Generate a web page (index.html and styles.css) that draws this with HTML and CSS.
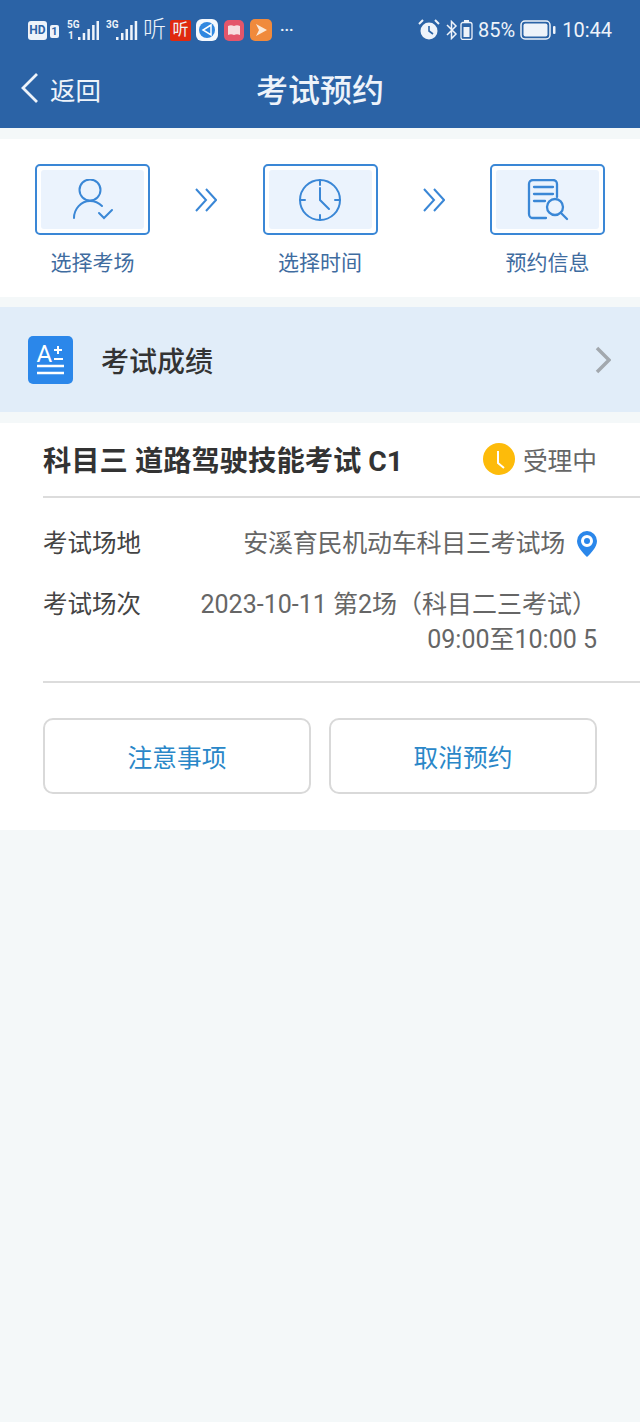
FILE: index.html
```html
<!DOCTYPE html>
<html lang="zh-CN">
  <head>
    <meta charset="UTF-8" />
    <meta name="viewport" content="width=device-width, initial-scale=1.0" />
    <title>考试预约</title>
    <link rel="stylesheet" href="styles.css">
  </head>
  <body>
    <header class="top">
      <div class="status">
        <div class="status-left">
          <span class="hd">HD</span>
          <span class="sim">1</span>
          <svg class="signal signal-5g" width="32" height="22" viewBox="0 0 32 22">
            <text x="0" y="9" class="tiny">5G</text>
            <text x="1" y="20" class="tiny">1</text>
            <g fill="#eef3fa">
              <rect x="11" y="18" width="2.500" height="3"/><rect x="15.700" y="14" width="2.500" height="7"/><rect x="20.400" y="10" width="2.500" height="11"/><rect x="25.100" y="6" width="2.500" height="15"/><rect x="29.500" y="2" width="2.500" height="19"/>
            </g>
          </svg>
          <svg class="signal signal-3g" width="32" height="22" viewBox="0 0 32 22">
            <text x="0" y="9" class="tiny">3G</text>
            <g fill="#eef3fa">
              <rect x="10" y="18" width="2.500" height="3"/><rect x="15" y="14" width="2.500" height="7"/><rect x="19.500" y="10" width="2.500" height="11"/><rect x="24.200" y="6" width="2.500" height="15"/><rect x="28.700" y="2" width="2.500" height="19"/>
            </g>
          </svg>
          <span class="ting">听</span>
          <span class="app app-red">听</span>
          <svg class="app-svg" width="22" height="22" viewBox="0 0 22 22">
            <rect width="22" height="22" rx="6" fill="#f4f8fd"/>
            <circle cx="11" cy="11" r="8" fill="#2f87e0"/>
            <path d="M15 6 7 11l8 5z" fill="none" stroke="#fff" stroke-width="1.500"/>
          </svg>
          <svg class="app-svg app-book" width="20" height="21" viewBox="0 0 20 21">
            <rect width="20" height="21" rx="5" fill="#e4566a"/>
            <path d="M4 6c2-1 4-1 6 0 2-1 4-1 6 0v9c-2-1-4-1-6 0-2-1-4-1-6 0z" fill="#f7dfe0"/>
          </svg>
          <svg class="app-svg app-play" width="22" height="22" viewBox="0 0 22 22">
            <rect width="22" height="22" rx="5" fill="#f08a3c"/>
            <path d="M6 5l11 6-11 6 3-6z" fill="#fbe9d8"/>
          </svg>
          <span class="more">···</span>
        </div>
        <div class="status-right">
          <svg width="22" height="22" viewBox="0 0 22 22">
            <circle cx="11" cy="12" r="8.500" fill="#eef3fa"/>
            <path d="M1 5l4-4M21 5l-4-4" stroke="#eef3fa" stroke-width="2"/>
            <path d="M11 7v5l4 3" fill="none" stroke="#2b63a6" stroke-width="1.600"/>
          </svg>
          <svg class="bt" width="12" height="20" viewBox="0 0 12 20">
            <path d="M1 5l9 9-4.500 4.500V1.500L10 6l-9 9" fill="none" stroke="#eef3fa" stroke-width="1.500"/>
          </svg>
          <svg class="mini-batt" width="13" height="20" viewBox="0 0 13 20">
            <rect x="4" y="0" width="5" height="2" fill="#eef3fa"/>
            <rect x="1" y="2.500" width="11" height="17" rx="2" fill="none" stroke="#eef3fa" stroke-width="1.300"/>
            <rect x="3.500" y="7" width="6" height="10" fill="#eef3fa"/>
          </svg>
          <span class="pct">85%</span>
          <svg class="batt" width="36" height="20" viewBox="0 0 36 20">
            <rect x="1" y="1" width="29" height="18" rx="4" fill="none" stroke="#eef3fa" stroke-width="1.500"/>
            <rect x="3.500" y="3.500" width="24" height="13" rx="2" fill="#eef3fa"/>
            <rect x="33" y="6" width="2.500" height="8" rx="1" fill="#eef3fa"/>
          </svg>
          <span class="time">10:44</span>
        </div>
      </div>
      <nav class="nav">
        <a class="back">
          <svg width="20" height="32" viewBox="0 0 20 32">
            <path d="M17 2 3 16l14 14" fill="none" stroke="#eef3fa" stroke-width="2.800"/>
          </svg>
          <span>返回</span>
        </a>
        <h1>考试预约</h1>
      </nav>
    </header>

    <section class="steps">
      <div class="step">
        <div class="step-box">
          <div class="step-inner">
            <svg width="42" height="42" viewBox="0 0 42 42" class="ico">
              <circle cx="18" cy="11" r="10.500"/>
              <path d="M2 39c0-9 7-17 16-17 5 0 9 2 12 5"/>
              <path d="M27 34l5 5 8-8"/>
            </svg>
          </div>
        </div>
        <span>选择考场</span>
      </div>
      <svg class="arrows" width="22" height="24" viewBox="0 0 22 24">
        <path d="M1 1l10 11L1 23M11 1l10 11-10 11"/>
      </svg>
      <div class="step">
        <div class="step-box">
          <div class="step-inner">
            <svg width="42" height="42" viewBox="0 0 42 42" class="ico">
              <circle cx="21" cy="21" r="20"/>
              <path d="M21 1v5M21 36v5M1 21h5M36 21h5M21 9v12l9 9"/>
            </svg>
          </div>
        </div>
        <span>选择时间</span>
      </div>
      <svg class="arrows" width="22" height="24" viewBox="0 0 22 24">
        <path d="M1 1l10 11L1 23M11 1l10 11-10 11"/>
      </svg>
      <div class="step">
        <div class="step-box">
          <div class="step-inner">
            <svg width="42" height="42" viewBox="0 0 42 42" class="ico doc">
              <path d="M19 39H6a4 4 0 0 1-4-4V5a4 4 0 0 1 4-4h20a4 4 0 0 1 4 4v13"/>
              <path d="M7 8h19M7 15h19M7 22h11"/>
              <circle cx="28" cy="28" r="8"/>
              <path d="M34 34l6 6"/>
            </svg>
          </div>
        </div>
        <span>预约信息</span>
      </div>
    </section>

    <section class="score">
      <svg width="45" height="48" viewBox="0 0 45 48">
        <rect width="45" height="48" rx="5" fill="#2b87ea"/>
        <text x="8.500" y="26" class="grade">A</text>
        <path d="M26 14h8M30 10v8M26 23h9" stroke="#fff" stroke-width="2" fill="none"/>
        <path d="M9 30h27M9 37h27" stroke="#fff" stroke-width="2.500" fill="none"/>
      </svg>
      <span class="score-title">考试成绩</span>
      <svg class="chev" width="16" height="28" viewBox="0 0 16 28">
        <path d="M2 2l12 12L2 26" fill="none" stroke="#a2a8ae" stroke-width="3.500"/>
      </svg>
    </section>

    <section class="card">
      <div class="card-head">
        <h2>科目三 道路驾驶技能考试 C1</h2>
        <div class="state">
          <svg width="32" height="32" viewBox="0 0 32 32">
            <circle cx="16" cy="16" r="16" fill="#fdbb0a"/>
            <path d="M15 8v12l6 5" fill="none" stroke="#fff" stroke-width="2"/>
          </svg>
          <span>受理中</span>
        </div>
      </div>
      <div class="info">
        <div class="info-row">
          <span class="info-label">考试场地</span>
          <div class="info-value">
            <span class="place">安溪育民机动车科目三考试场</span>
            <svg width="20" height="26" viewBox="0 0 20 26">
              <path fill-rule="evenodd" d="M10 0a10 10 0 0 1 10 10c0 6-6 12-10 16C6 22 0 16 0 10A10 10 0 0 1 10 0zm0 4a6 6 0 1 0 0 12 6 6 0 0 0 0-12z" fill="#2b87ea"/>
              <circle cx="10" cy="10" r="3" fill="#2b87ea"/>
            </svg>
          </div>
        </div>
        <div class="info-row">
          <span class="info-label">考试场次</span>
          <div class="info-value">2023-10-11 第2场（科目二三考试）<br>09:00至10:00 5</div>
        </div>
      </div>
      <div class="actions">
        <button>注意事项</button>
        <button>取消预约</button>
      </div>
    </section>
  </body>
</html>
```
FILE: styles.css
```css
* {
  box-sizing: border-box;
}
body {
  margin: 0;
  min-height: 1422px;
  background-color: #f4f8f9;
  font-family: Roboto, "Noto Sans CJK SC", sans-serif;
  color: #333;
}
h1,
h2 {
  margin: 0;
  font-weight: 500;
}

/* status bar + title */
.top {
  height: 128px;
  background-color: #2b63a6;
  color: #eef3fa;
}
.status {
  display: flex;
  justify-content: space-between;
  align-items: center;
  height: 58px;
  padding: 2px 28px 0;
}
.status-left,
.status-right {
  display: flex;
  align-items: center;
}
.hd {
  width: 19px;
  height: 19px;
  border-radius: 3px;
  background-color: #eef3fa;
  color: #2b63a6;
  font-size: 12px;
  font-weight: 700;
  line-height: 19px;
  text-align: center;
}
.sim {
  width: 9px;
  height: 13px;
  margin: 3px 0 0 3px;
  border-radius: 2px;
  background-color: #eef3fa;
  color: #2b63a6;
  font-size: 11px;
  font-weight: 700;
  line-height: 13px;
  text-align: center;
}
.signal-5g {
  margin-left: 8px;
}
.signal-3g {
  margin-left: 7px;
}
.tiny {
  fill: #eef3fa;
  font-family: Roboto, sans-serif;
  font-size: 10px;
  font-weight: 700;
}
.ting {
  width: 24px;
  margin-left: 5px;
  font-size: 23px;
  font-weight: 300;
  line-height: 24px;
}
.app {
  width: 21px;
  height: 21px;
  margin-left: 3px;
  background-color: #e0290f;
  border-radius: 2px;
  font-size: 16px;
  line-height: 20px;
  text-align: center;
}
.app-svg {
  margin-left: 5px;
}
.app-book {
  margin-left: 6px;
}
.app-play {
  margin-left: 6px;
}
.more {
  margin-left: 8px;
  font-size: 15px;
  font-weight: 700;
}
.status-right {
  font-size: 20px;
}
.bt {
  margin-left: 6px;
}
.mini-batt {
  margin-left: 2px;
}
.pct {
  margin-left: 5px;
}
.batt {
  margin-left: 5px;
}
.time {
  margin-left: 6px;
}
.nav {
  display: grid;
  grid-template-columns: 1fr auto 1fr;
  align-items: center;
  height: 60px;
  padding: 0 20px;
}
.back {
  display: flex;
  align-items: center;
  gap: 10px;
  font-size: 25.500px;
}
.nav h1 {
  font-size: 32px;
}

/* steps */
.steps {
  display: flex;
  justify-content: space-between;
  align-items: flex-start;
  height: 158px;
  margin-top: 11px;
  padding: 25px 35px 0;
  background-color: #fff;
}
.step {
  display: flex;
  flex-direction: column;
  align-items: center;
  gap: 11px;
  width: 115px;
  color: #3f6c9f;
  font-size: 21px;
  line-height: 34px;
}
.step-box {
  width: 115px;
  height: 71px;
  padding: 4px;
  border: 2px solid #3a87d6;
  border-radius: 5px;
}
.step-inner {
  display: flex;
  justify-content: center;
  align-items: center;
  height: 100%;
  border-radius: 3px;
  background-color: #ebf3fd;
}
.ico {
  fill: none;
  stroke: #3a87d6;
  stroke-width: 2;
  stroke-linecap: round;
}
.doc {
  stroke-width: 2.300;
}
.arrows {
  margin-top: 24px;
  fill: none;
  stroke: #3a87d6;
  stroke-width: 2;
}

/* score row */
.score {
  display: flex;
  align-items: center;
  height: 105px;
  margin-top: 10px;
  padding: 0 29px 0 28px;
  background-color: #e1edf9;
}
.grade {
  fill: #fff;
  font-family: Roboto, sans-serif;
  font-size: 24px;
}
.score-title {
  flex: 1;
  margin-left: 28px;
  font-size: 28px;
  font-weight: 500;
}

/* appointment card */
.card {
  height: 407px;
  margin-top: 11px;
  padding-left: 43px;
  background-color: #fff;
}
.card-head {
  display: flex;
  justify-content: space-between;
  align-items: center;
  height: 75px;
  padding: 0 43px 2px 0;
  border-bottom: 2px solid #dcdcdc;
}
.card-head h2 {
  font-size: 28.300px;
  font-weight: 700;
  color: #333;
}
.state {
  display: flex;
  align-items: center;
  gap: 8px;
  color: #666;
  font-size: 24.700px;
}
.info {
  height: 185px;
  padding: 28px 43px 0 0;
  border-bottom: 2px solid #dcdcdc;
  font-size: 25px;
  line-height: 35px;
}
.info-row {
  display: flex;
  justify-content: space-between;
  margin-bottom: 26px;
}
.info-label {
  flex-shrink: 0;
  color: #444;
  font-size: 24.500px;
}
.info-value {
  display: flex;
  align-items: center;
  gap: 12px;
  color: #666;
  text-align: right;
}
.place {
  letter-spacing: -0.25px;
}
.info-row:last-child .info-value {
  display: block;
}
.actions {
  display: flex;
  gap: 18px;
  padding: 35px 43px 0 0;
}
.actions button {
  flex: 1;
  height: 76px;
  border: 2px solid #d9d9d9;
  border-radius: 10px;
  background-color: #fff;
  color: #2a87c8;
  font-family: inherit;
  font-size: 24.700px;
}
```
